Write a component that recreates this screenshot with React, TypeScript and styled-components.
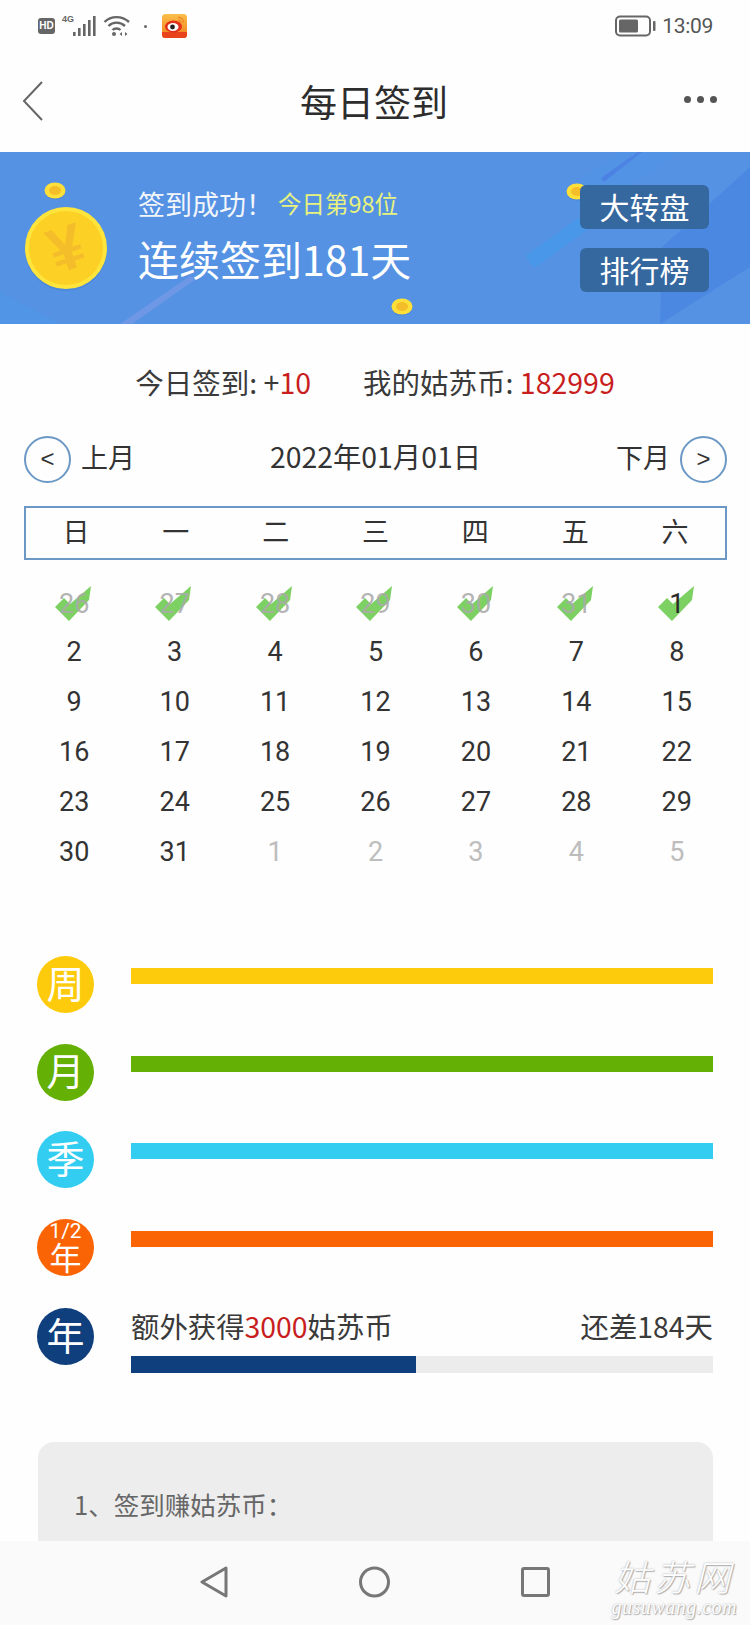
import React from "react";
import styled, { createGlobalStyle } from "styled-components";

const GlobalStyle = createGlobalStyle`
  html, body {
    margin: 0;
    padding: 0;
    background: #fff;
    font-family: "Noto Sans CJK SC", "Noto Sans", sans-serif;
  }
  * { box-sizing: border-box; }
`;

const Page = styled.div`
  position: relative;
  width: 750px;
  height: 1625px;
  overflow: hidden;
  background: #fefefe;
  color: #333;
`;

/* status bar */
const StatusBar = styled.div`
  height: 50px;
  display: flex;
  align-items: center;
  padding: 2px 37px 0 38px;
`;

const HdBadge = styled.span`
  width: 17px;
  height: 16px;
  border-radius: 3px;
  background: #666;
  color: #fff;
  font: 700 10px/16px "Liberation Sans Narrow", "Liberation Sans", sans-serif;
  text-align: center;
`;

const NetLabel = styled.span`
  margin: -14px 0 0 7px;
  font: 700 9px/10px "Liberation Sans", sans-serif;
  color: #666;
  width: 11px;
`;

const StatusDot = styled.span`
  width: 3px;
  height: 3px;
  margin: 0 15px 0 13px;
  border-radius: 50%;
  background: #666;
`;

const Time = styled.span`
  margin-left: 5px;
  font: 400 21px/30px Roboto, sans-serif;
  letter-spacing: -0.3px;
  color: #555;
`;

const Spacer = styled.div`
  flex: 1;
`;

/* title bar */
const TitleBar = styled.header`
  height: 102px;
  display: grid;
  grid-template-columns: 1fr auto 1fr;
  align-items: center;
  padding: 0 33px 0 22px;
`;

const Title = styled.h1`
  margin: 0;
  padding-left: 9px;
  font-size: 37px;
  font-weight: 400;
  line-height: 50px;
  color: #2d2d2d;
`;

const MoreDots = styled.div`
  justify-self: end;
  display: flex;
  gap: 6px;
  margin-top: -4px;

  i {
    width: 7px;
    height: 7px;
    border-radius: 50%;
    background: #555;
  }
`;

/* banner */
const Banner = styled.section`
  position: relative;
  height: 172px;
  display: flex;
  align-items: center;
  padding: 0 41px 0 25px;
  overflow: hidden;
  background: #5592e3;
`;

const BannerArt = styled.svg`
  position: absolute;
  inset: 0;
`;

const SmallCoin = styled.svg<{ $left: number; $top: number }>`
  position: absolute;
  left: ${(p) => p.$left}px;
  top: ${(p) => p.$top}px;
`;

const CoinWrap = styled.div`
  position: relative;
  flex: none;
  width: 82px;
  height: 82px;
  margin: 20px 31px 0 0;
`;

const BannerText = styled.div`
  position: relative;
  display: flex;
  flex-direction: column;
  color: #fff;
`;

const SignedLine = styled.div`
  display: flex;
  align-items: center;
  height: 40px;
  margin-top: -6px;
  font-size: 27px;
  color: #f2f6fb;
`;

const RankText = styled.span`
  margin-left: 5px;
  font-size: 23.5px;
  color: #e8f27e;
`;

const StreakLine = styled.div`
  margin-top: 6px;
  font-size: 41px;
  line-height: 58px;
`;

const BannerButtons = styled.div`
  position: relative;
  display: flex;
  flex-direction: column;
  gap: 19px;
`;

const BannerButton = styled.div`
  width: 129px;
  height: 44px;
  border-radius: 6px;
  background: #35689f;
  color: #fff;
  font-size: 30px;
  line-height: 43px;
  text-align: center;
`;

/* stats */
const Stats = styled.div`
  margin-top: 40px;
  display: flex;
  justify-content: center;
  gap: 52px;
  font-size: 28.5px;
  line-height: 36px;
  color: #3a3a3a;
`;

const Red = styled.span`
  color: #c81e1e;
`;

/* calendar */
const MonthNav = styled.div`
  margin-top: 35px;
  padding: 0 23px 0 24px;
  display: grid;
  grid-template-columns: 1fr auto 1fr;
  align-items: center;
  height: 48px;
`;

const MonthSide = styled.div<{ $right?: boolean }>`
  display: flex;
  align-items: center;
  gap: 10px;
  font-size: 27px;
  justify-content: ${(p) => (p.$right ? "flex-end" : "flex-start")};
`;

const MonthLabel = styled.span`
  margin-top: -5px;
`;

const ArrowCircle = styled.div`
  width: 47px;
  height: 47px;
  border: 2px solid #6b98c4;
  border-radius: 50%;
  display: flex;
  align-items: center;
  justify-content: center;
  font: 400 24px/1 "Liberation Sans", sans-serif;
  color: #333;
`;

const DateLabel = styled.div`
  font-size: 28.4px;
  line-height: 40px;
  margin-top: -7px;
  color: #333;
`;

const WeekRow = styled.div`
  margin: 23px 23px 0 24px;
  height: 54px;
  border: 2px solid #6b98c4;
  display: grid;
  grid-template-columns: repeat(7, 1fr);
  align-items: center;
  text-align: center;
  font-size: 27px;
  line-height: 44px;
  color: #333;

  span {
    margin-top: -4px;
  }
`;

const DayGrid = styled.div`
  margin: 17px 23px 0 24px;
  display: grid;
  grid-template-columns: repeat(7, 1fr);
  grid-auto-rows: 50px;
`;

const Day = styled.div<{ $muted?: boolean }>`
  position: relative;
  display: flex;
  align-items: center;
  justify-content: center;
  font-family: Roboto, sans-serif;
  font-size: 27px;
  color: ${(p) => (p.$muted ? "#bdbdbd" : "#333")};
`;

const CheckedNumber = styled.span<{ $muted?: boolean }>`
  position: relative;
  margin-top: 3px;
  color: ${(p) => (p.$muted ? "rgba(170, 170, 170, 0.9)" : "#2a2a2a")};
`;

const Check = styled.svg`
  position: absolute;
  left: 31px;
  top: 9px;
`;

/* rewards */
const Rewards = styled.div`
  margin-top: 79px;
  padding: 0 37px;
  display: flex;
  flex-direction: column;
  gap: 30.5px;
`;

const RewardRow = styled.div`
  display: flex;
  gap: 37px;
  min-height: 57px;
`;

const LastRow = styled(RewardRow)`
  margin-top: 2px;
`;

const Badge = styled.div<{ $color: string }>`
  flex: none;
  width: 57px;
  height: 57px;
  border-radius: 50%;
  background: ${(p) => p.$color};
  color: #fff;
  display: flex;
  flex-direction: column;
  align-items: center;
  justify-content: center;
`;

const BadgeChar = styled.span`
  margin-top: -6px;
  font-size: 38px;
  line-height: 44px;
`;

const BadgeSmall = styled.span`
  font-family: Roboto, sans-serif;
  font-size: 21px;
  line-height: 18px;
`;

const BadgeYear = styled.span`
  font-size: 32px;
  line-height: 32px;
`;

const Bar = styled.div<{ $color: string }>`
  flex: 1;
  height: 16px;
  margin-top: 12px;
  background: ${(p) => p.$color};
`;

const YearColumn = styled.div`
  flex: 1;
  margin-top: -2px;
`;

const YearHead = styled.div`
  display: flex;
  justify-content: space-between;
  font-size: 28.4px;
  line-height: 40px;
  color: #3a3a3a;
`;

const Track = styled.div`
  margin-top: 10px;
  height: 17px;
  background: #ececec;
`;

const TrackFill = styled.div`
  height: 100%;
  background: #0f3f7c;
`;

/* rules card */
const RulesCard = styled.div`
  margin: 69px 37px 0 38px;
  padding: 42px 36px;
  min-height: 260px;
  border-radius: 16px;
  background: #ededed;
  font-size: 25.5px;
  line-height: 40px;
  color: #666;
`;

/* bottom navigation */
const NavBar = styled.nav`
  position: absolute;
  left: 0;
  right: 0;
  bottom: 0;
  height: 84px;
  display: flex;
  align-items: center;
  justify-content: center;
  gap: 131px;
  padding-bottom: 2px;
  background: #fafafa;
`;

const Watermark = styled.div`
  position: absolute;
  right: 13px;
  bottom: 10px;
  text-align: center;
  color: #fff;
  text-shadow: 0 0 2px #a8a8a8, 1px 1px 1px #b0b0b0;
  font-style: italic;
`;

const WatermarkName = styled.div`
  font-size: 36px;
  font-weight: 300;
  line-height: 36px;
  letter-spacing: 4px;
  margin-bottom: 6px;
`;

const WatermarkSite = styled.div`
  font: italic 400 20px/16px "Liberation Serif", serif;
  letter-spacing: 0.5px;
`;

const weeks = ["日", "一", "二", "三", "四", "五", "六"];
const checked = [26, 27, 28, 29, 30, 31, 1];
const days = Array.from({ length: 30 }, (_, i) => i + 2);
const nextDays = [1, 2, 3, 4, 5];

const rewards = [
  { name: "周", color: "#fdcb0c" },
  { name: "月", color: "#65b005" },
  { name: "季", color: "#32cdf0" },
];

const streak = 181;
const yearProgress = 49;

function Coin() {
  return (
    <svg width="82" height="84" viewBox="0 0 82 84">
      <circle cx="41" cy="43" r="41" fill="#3d78c8" opacity="0.35" />
      <circle cx="41" cy="41" r="41" fill="#ffe53b" />
      <circle cx="41" cy="41" r="37" fill="#fdd026" />
      <text
        x="41"
        y="63"
        textAnchor="middle"
        fontFamily="Liberation Sans"
        fontWeight="700"
        fontSize="63"
        fill="#f4bd2a"
        transform="rotate(-18 41 41)"
      >
        ¥
      </text>
    </svg>
  );
}

function TinyCoin({ left, top }: { left: number; top: number }) {
  return (
    <SmallCoin $left={left} $top={top} width="22" height="18" viewBox="0 0 22 18">
      <ellipse cx="11" cy="9.5" rx="10.5" ry="8" fill="#3d78c8" opacity="0.45" />
      <ellipse cx="11" cy="8.5" rx="10.5" ry="8" fill="#ffe03a" />
      <ellipse cx="11" cy="8.5" rx="6" ry="4.5" fill="#f4bd2a" />
    </SmallCoin>
  );
}

function App() {
  return (
    <Page>
      <GlobalStyle />
      <StatusBar>
        <HdBadge>HD</HdBadge>
        <NetLabel>4G</NetLabel>
        <svg width="23" height="22" viewBox="0 0 23 22" fill="#666">
          <rect x="0" y="17" width="2.6" height="4" />
          <rect x="5" y="13" width="2.6" height="8" />
          <rect x="10" y="9" width="2.6" height="12" />
          <rect x="15" y="5" width="2.6" height="16" />
          <rect x="20" y="1" width="2.6" height="20" />
        </svg>
        <svg width="28" height="22" viewBox="0 0 28 22" fill="none" stroke="#666" strokeWidth="2.4" style={{ marginLeft: 7 }}>
          <path d="M1.5 7 C 8 0.5, 19 0.5, 26 7" />
          <path d="M5.5 11 C 10 6.5, 17 6.5, 22 11" />
          <path d="M9.5 15 C 11.5 13, 15.5 13, 17.5 15" />
          <circle cx="11" cy="19" r="2" fill="#666" stroke="none" />
          <path d="M19 17l-2.5 2 2.5 2zM22 17l2.5 2-2.5 2z" fill="#666" stroke="none" />
        </svg>
        <StatusDot />
        <svg width="25" height="24" viewBox="0 0 25 24">
          <defs>
            <linearGradient id="weiboBg" x1="0" y1="0" x2="0" y2="1">
              <stop offset="0" stopColor="#fbc04a" />
              <stop offset="1" stopColor="#f27a1c" />
            </linearGradient>
          </defs>
          <rect width="25" height="24" rx="3.5" fill="url(#weiboBg)" />
          <path d="M0 18h25v2.5a3.5 3.5 0 0 1-3.5 3.5h-18A3.5 3.5 0 0 1 0 20.5z" fill="#e8431c" />
          <ellipse cx="11.5" cy="12.5" rx="8.5" ry="6" fill="#e0301c" />
          <ellipse cx="11" cy="13" rx="5.5" ry="4" fill="#fff" />
          <circle cx="10.5" cy="13" r="2.4" fill="#222" />
          <path d="M16 3.5c3-.4 5.5 1.6 5.5 5M16 6.5c1.5-.2 3 .8 3 2.5" stroke="#f0882a" strokeWidth="1.4" fill="none" />
        </svg>
        <Spacer />
        <svg width="42" height="22" viewBox="0 0 42 22">
          <rect x="1" y="1.5" width="34" height="19" rx="4" fill="none" stroke="#666" strokeWidth="2" />
          <rect x="4" y="4.5" width="19" height="13" rx="1.5" fill="#666" />
          <rect x="38" y="6" width="2.5" height="10" rx="1" fill="#666" />
        </svg>
        <Time>13:09</Time>
      </StatusBar>

      <TitleBar>
        <svg width="22" height="40" viewBox="0 0 22 40" fill="none" stroke="#666" strokeWidth="2">
          <path d="M20 1 L2 20 L20 39" />
        </svg>
        <Title>每日签到</Title>
        <MoreDots>
          <i />
          <i />
          <i />
        </MoreDots>
      </TitleBar>

      <Banner>
        <BannerArt width="750" height="172" viewBox="0 0 750 172">
          <polygon points="0,172 0,140 60,172" fill="#4a9aea" opacity="0.4" />
          <polygon points="120,172 190,124 196,127 132,172" fill="#7f9be6" opacity="0.6" />
          <polygon points="525,104 590,58 600,68 535,116" fill="#4698ea" opacity="0.8" />
          <polygon points="560,40 620,0 680,0 590,62" fill="#4f96e8" opacity="0.4" />
          <polygon points="601,26 638,0 642,0 604,30" fill="#4a7ee2" opacity="0.8" />
          <polygon points="662,95 750,15 750,115 660,172" fill="#4a86e0" opacity="0.85" />
        </BannerArt>
        <TinyCoin left={44} top={30} />
        <TinyCoin left={391} top={146} />
        <TinyCoin left={566} top={31} />
        <CoinWrap>
          <Coin />
        </CoinWrap>
        <BannerText>
          <SignedLine>
            签到成功！
            <RankText>今日第98位</RankText>
          </SignedLine>
          <StreakLine>连续签到{streak}天</StreakLine>
        </BannerText>
        <Spacer />
        <BannerButtons>
          <BannerButton>大转盘</BannerButton>
          <BannerButton>排行榜</BannerButton>
        </BannerButtons>
      </Banner>

      <Stats>
        <span>
          今日签到: +<Red>10</Red>
        </span>
        <span>
          我的姑苏币: <Red>182999</Red>
        </span>
      </Stats>

      <MonthNav>
        <MonthSide>
          <ArrowCircle>&lt;</ArrowCircle>
          <MonthLabel>上月</MonthLabel>
        </MonthSide>
        <DateLabel>2022年01月01日</DateLabel>
        <MonthSide $right>
          <MonthLabel>下月</MonthLabel>
          <ArrowCircle>&gt;</ArrowCircle>
        </MonthSide>
      </MonthNav>

      <WeekRow>
        {weeks.map((w) => (
          <span key={w}>{w}</span>
        ))}
      </WeekRow>

      <DayGrid>
        {checked.map((d) => (
          <Day key={`c${d}`}>
            <Check width="36" height="35" viewBox="0 0 36 35">
              <polygon points="0,21 9,12 15,18 36,0 34,14 14,35" fill="#7dd163" />
            </Check>
            <CheckedNumber $muted={d !== 1}>{d}</CheckedNumber>
          </Day>
        ))}
        {days.map((d) => (
          <Day key={d}>{d}</Day>
        ))}
        {nextDays.map((d) => (
          <Day key={`n${d}`} $muted>
            {d}
          </Day>
        ))}
      </DayGrid>

      <Rewards>
        {rewards.map((r) => (
          <RewardRow key={r.name}>
            <Badge $color={r.color}>
              <BadgeChar>{r.name}</BadgeChar>
            </Badge>
            <Bar $color={r.color} />
          </RewardRow>
        ))}
        <RewardRow>
          <Badge $color="#fb6405">
            <BadgeSmall>1/2</BadgeSmall>
            <BadgeYear>年</BadgeYear>
          </Badge>
          <Bar $color="#fb6405" />
        </RewardRow>
        <LastRow>
          <Badge $color="#0f3f7c">
            <BadgeChar>年</BadgeChar>
          </Badge>
          <YearColumn>
            <YearHead>
              <span>
                额外获得<Red>3000</Red>姑苏币
              </span>
              <span>还差184天</span>
            </YearHead>
            <Track>
              <TrackFill style={{ width: `${yearProgress}%` }} />
            </Track>
          </YearColumn>
        </LastRow>
      </Rewards>

      <RulesCard>1、签到赚姑苏币：</RulesCard>

      <NavBar>
        <svg width="28" height="32" viewBox="0 0 28 32" fill="none" stroke="#777" strokeWidth="3" strokeLinejoin="round">
          <path d="M26 2 L2 16 L26 30 Z" />
        </svg>
        <svg width="31" height="32" viewBox="0 0 31 32" fill="none" stroke="#777" strokeWidth="3">
          <circle cx="15.5" cy="16" r="14" />
        </svg>
        <svg width="29" height="30" viewBox="0 0 29 30" fill="none" stroke="#777" strokeWidth="3" strokeLinejoin="round">
          <rect x="1.5" y="1.5" width="26" height="27" rx="1.5" />
        </svg>
        <Watermark>
          <WatermarkName>姑苏网</WatermarkName>
          <WatermarkSite>gusuwang.com</WatermarkSite>
        </Watermark>
      </NavBar>
    </Page>
  );
}

export default App;
